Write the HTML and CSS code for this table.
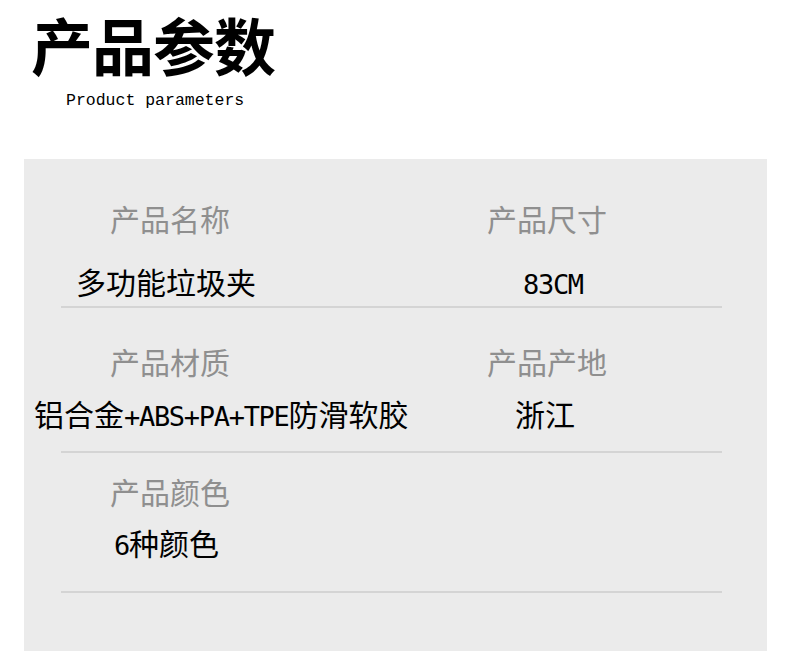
FILE: index.html
```html
<!DOCTYPE html>
<html lang="zh">
<head>
<meta charset="utf-8">
<title>产品参数</title>
<link rel="stylesheet" href="styles.css">
</head>
<body>
<header class="head">
  <h1 class="title">产品参数</h1>
  <p class="subtitle">Product parameters</p>
</header>
<section class="panel">
  <div class="row row-1">
    <div class="cell">
      <div class="label l-left">产品名称</div>
      <div class="value v-name">多功能垃圾夹</div>
    </div>
    <div class="cell">
      <div class="label l-right">产品尺寸</div>
      <div class="value v-size"><span class="lat">83CM</span></div>
    </div>
  </div>
  <div class="rule rule-1"></div>
  <div class="row row-2">
    <div class="cell">
      <div class="label l-left">产品材质</div>
      <div class="value v-mat">铝合金<span class="lat">+ABS+PA+TPE</span>防滑软胶</div>
    </div>
    <div class="cell">
      <div class="label l-right">产品产地</div>
      <div class="value v-origin">浙江</div>
    </div>
  </div>
  <div class="rule rule-2"></div>
  <div class="row row-3">
    <div class="cell">
      <div class="label l-left">产品颜色</div>
      <div class="value v-color"><span class="lat">6</span>种颜色</div>
    </div>
  </div>
  <div class="rule rule-3"></div>
</section>
</body>
</html>
```
FILE: styles.css
```css
html, body {
  margin: 0;
  padding: 0;
  background: #ffffff;
}
body {
  font-family: "Noto Sans CJK SC", "Noto Sans", sans-serif;
  color: #000;
  overflow: hidden;
}
.head {
  padding: 13px 0 0 31px;
  height: 144px;
  box-sizing: border-box;
}
.title {
  margin: 0;
  font-size: 62px;
  line-height: 62px;
  font-weight: 700;
  letter-spacing: -1px;
}
.subtitle {
  margin: 17px 0 0 35px;
  font-family: "Liberation Mono", "DejaVu Sans Mono", monospace;
  font-size: 16.5px;
  line-height: 18px;
}
.panel {
  margin: 15px 0 0 24px;
  width: 743px;
  height: 520px;
  background: #ebebeb;
  padding-top: 44px;
  box-sizing: border-box;
}
.row {
  display: grid;
  grid-template-columns: 380px 1fr;
}
.cell {
  display: flex;
  flex-direction: column;
  align-items: flex-start;
}
.label {
  font-size: 30px;
  line-height: 30px;
  height: 30px;
  color: #8f8f8f;
  white-space: nowrap;
}
.value {
  font-size: 30px;
  line-height: 30px;
  height: 30px;
  color: #000;
  white-space: nowrap;
}
.lat {
  font-family: "DejaVu Sans Mono", "Liberation Mono", monospace;
  font-size: 27px;
  line-height: 0;
  letter-spacing: -1.3px;
}
.l-left { padding-left: 86px; }
.l-right { padding-left: 83px; }
.v-name { padding-left: 52px; }
.v-size { padding-left: 119px; }
.v-mat { padding-left: 10px; }
.v-origin { padding-left: 111px; }
.v-color { padding-left: 90px; }

.row-1 .value { margin-top: 33px; }
.row-2 .value { margin-top: 22px; }
.row-3 .value { margin-top: 21px; }

.rule {
  height: 2px;
  background: #d4d4d4;
  margin-left: 37px;
  width: 661px;
}
.rule-1 { margin-top: 10px; }
.row-2 { margin-top: 38px; }
.rule-2 { margin-top: 23px; }
.row-3 { margin-top: 23px; }
.rule-3 { margin-top: 34px; }
```
